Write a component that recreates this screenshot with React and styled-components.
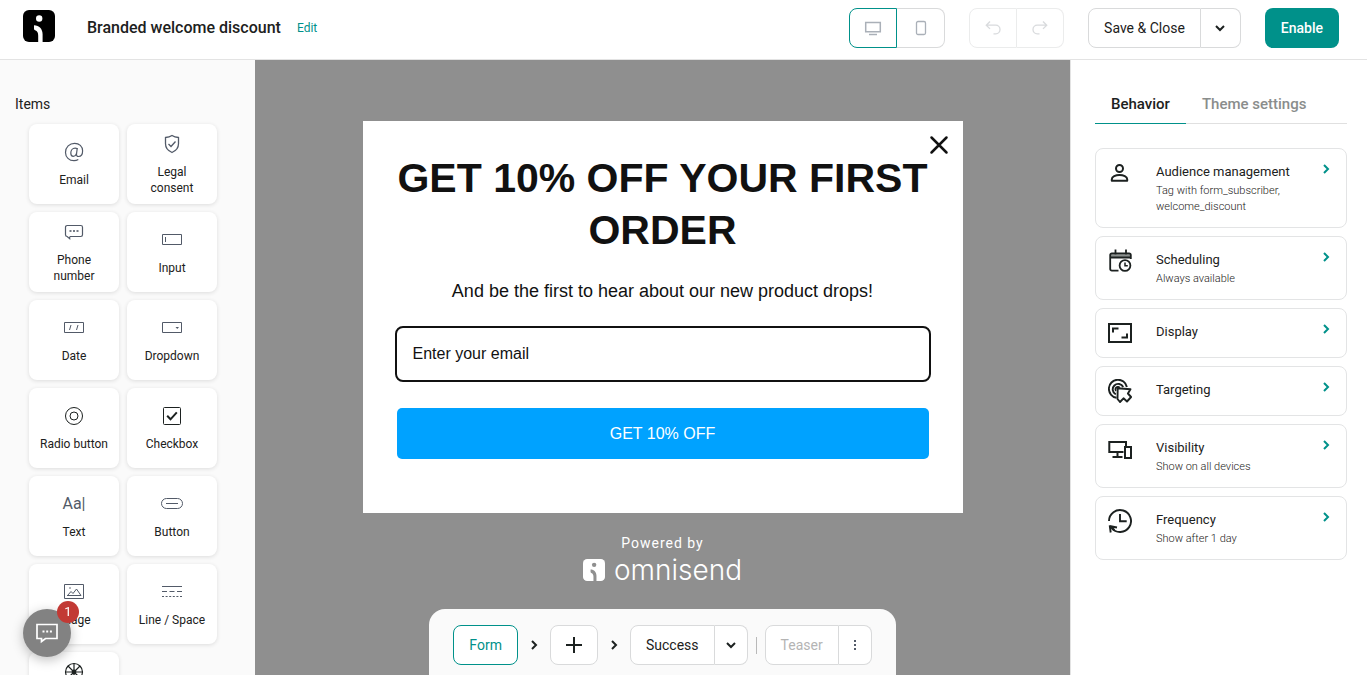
import React, { useState } from 'react';
import styled, { createGlobalStyle } from 'styled-components';

const GlobalStyle = createGlobalStyle`
  * {
    box-sizing: border-box;
  }

  body {
    margin: 0;
    font-family: Roboto, sans-serif;
    font-size: 14px;
    color: #1c2120;
    background: #fff;
  }

  button,
  input {
    font-family: inherit;
    color: inherit;
  }

  svg {
    display: block;
    flex: none;
  }
`;

const Page = styled.div`
  display: flex;
  flex-direction: column;
  height: 100vh;
  overflow: hidden;
`;

const Header = styled.header`
  display: flex;
  align-items: center;
  gap: 24px;
  flex: none;
  padding: 8px 28px 11px 23px;
  border-bottom: 1px solid #e3e3e3;
  background: #fff;
`;

const Branding = styled.div`
  display: flex;
  align-items: center;
  gap: 32px;
  margin-right: auto;
`;

const LogoLink = styled.a`
  padding-bottom: 4px;
`;

const TitleGroup = styled.div`
  display: flex;
  align-items: center;
  gap: 16px;
`;

const Title = styled.h1`
  margin: 0;
  font-size: 16px;
  font-weight: 500;
  line-height: 24px;
`;

const EditLink = styled.a`
  font-size: 12px;
  line-height: 16px;
  color: #00918a;
  text-decoration: none;
`;

const ButtonGroup = styled.div`
  display: flex;
  opacity: ${p => (p.$faded ? 0.5 : 1)};
`;

const Button = styled.button`
  display: flex;
  align-items: center;
  justify-content: center;
  height: 40px;
  padding: 0 ${p => (p.$icon ? 0 : 15)}px;
  width: ${p => (p.$icon ? `${p.$icon}px` : 'auto')};
  border: 1px solid ${p => (p.$active ? '#00918a' : '#d9dadb')};
  border-radius: 8px;
  background: #fff;
  color: ${p => (p.$active ? '#00918a' : p.$muted ? '#b4b4b4' : '#1c2120')};
  font-size: 14px;
  font-weight: 400;
  line-height: 20px;
  cursor: pointer;

  ${ButtonGroup} > &:not(:last-child) {
    border-top-right-radius: 0;
    border-bottom-right-radius: 0;
  }

  ${ButtonGroup} > &:not(:first-child) {
    border-left: none;
    border-top-left-radius: 0;
    border-bottom-left-radius: 0;
  }
`;

const PrimaryButton = styled(Button)`
  padding: 0 16px;
  border: none;
  background: #00918a;
  color: #fff;
  font-weight: 500;
`;

const Body = styled.div`
  display: flex;
  flex: 1;
  min-height: 0;
`;

const Sidebar = styled.aside`
  flex: none;
  width: 255px;
  padding: 34px 15px;
  background: #fafafa;
  overflow-y: auto;
  scrollbar-width: none;
`;

const SidebarTitle = styled.h2`
  margin: 0 0 10px;
  font-size: 14px;
  font-weight: 400;
  line-height: 20px;
`;

const ItemGrid = styled.div`
  display: grid;
  grid-template-columns: 90px 90px;
  grid-auto-rows: 80px;
  gap: 8px;
  padding-left: 14px;
`;

const Item = styled.button`
  display: flex;
  flex-direction: column;
  align-items: center;
  justify-content: center;
  gap: 8px;
  padding: 0 8px;
  border: none;
  border-radius: 8px;
  background: #fff;
  box-shadow: 0 1px 4px rgba(0, 0, 0, 0.12);
  font-size: 12px;
  line-height: 16px;
  cursor: grab;
`;

const TextGlyph = styled.span`
  height: 24px;
  color: #525a68;
  font-size: 16px;
  font-weight: 400;
  line-height: 24px;
`;

const Canvas = styled.main`
  display: flex;
  flex-direction: column;
  align-items: center;
  flex: 1;
  min-width: 0;
  padding-top: 61px;
  background: #8f8f8f;
`;

const Popup = styled.form`
  position: relative;
  display: flex;
  flex-direction: column;
  width: 100%;
  max-width: 600px;
  padding: 31px 34px 54px;
  background: #fff;
  color: #111;
  font-family: 'Liberation Sans', Arial, sans-serif;
  text-align: center;
`;

const CloseButton = styled.button`
  position: absolute;
  top: 12px;
  right: 12px;
  padding: 0;
  border: none;
  background: none;
  cursor: pointer;
`;

const Headline = styled.h2`
  margin: 0;
  font-size: 41px;
  font-weight: 700;
  line-height: 52px;
`;

const Subline = styled.p`
  margin: 22px 0 24px;
  font-size: 18px;
  line-height: 26px;
`;

const EmailInput = styled.input`
  width: 100%;
  height: 52px;
  padding: 0 16px;
  border: none;
  border-radius: 6px;
  outline: 2px solid #111;
  background: #fff;
  font-size: 16px;

  &::placeholder {
    color: #111;
    opacity: 1;
  }
`;

const SubmitButton = styled.button`
  height: 51px;
  margin-top: 28px;
  border: none;
  border-radius: 5px;
  background: #00a2ff;
  color: #fff;
  font-size: 16px;
  cursor: pointer;
`;

const Powered = styled.div`
  display: flex;
  flex-direction: column;
  align-items: center;
  margin-top: 20px;
  color: #fff;
  font-size: 14px;
  line-height: 20px;
`;

const PoweredText = styled.span`
  letter-spacing: 1px;
`;

const Wordmark = styled.div`
  display: flex;
  align-items: center;
  gap: 9px;
  font-family: Inter, sans-serif;
  font-size: 28px;
  font-weight: 300;
  line-height: 34px;
`;

const StepBar = styled.nav`
  display: flex;
  align-items: center;
  margin-top: auto;
  padding: 16px 24px 10px;
  border-radius: 16px 16px 0 0;
  background: #fafafa;
`;

const StepArrow = styled.span`
  display: flex;
  justify-content: center;
  width: 32px;
`;

const StepDivider = styled.span`
  width: 1px;
  height: 17px;
  margin: 0 8px;
  background: #b9b9b9;
`;

const Settings = styled.aside`
  flex: none;
  width: 297px;
  padding: 24px 20px 24px 24px;
  border-left: 1px solid #e3e3e3;
  background: #fff;
  overflow-y: auto;
  scrollbar-width: none;
`;

const Tabs = styled.div`
  display: flex;
  margin-bottom: 24px;
  box-shadow: inset 0 -1px #e0e0e0;
`;

const Tab = styled.button`
  height: 40px;
  padding: 0 16px;
  border: none;
  border-bottom: 1px solid ${p => (p.$active ? '#00918a' : 'transparent')};
  background: none;
  color: ${p => (p.$active ? '#1c2120' : '#8a8d8c')};
  font-size: 15px;
  font-weight: 500;
  cursor: pointer;
`;

const CardList = styled.div`
  display: flex;
  flex-direction: column;
  gap: 8px;
`;

const Card = styled.button`
  display: flex;
  align-items: flex-start;
  gap: 24px;
  width: 100%;
  padding: 12px;
  border: 1px solid #e3e4e5;
  border-radius: 8px;
  background: #fff;
  text-align: left;
  cursor: pointer;
`;

const CardText = styled.span`
  display: flex;
  flex-direction: column;
  flex: 1;
  min-width: 0;
`;

const CardTitle = styled.span`
  font-size: 13px;
  line-height: 22px;
`;

const CardNote = styled.span`
  font-size: 11px;
  font-weight: 300;
  line-height: 16px;
`;

const ChatButton = styled.button`
  position: fixed;
  left: 23px;
  bottom: 18px;
  display: flex;
  align-items: center;
  justify-content: center;
  width: 48px;
  height: 48px;
  border: none;
  border-radius: 50%;
  background: #828282;
  color: #fff;
  box-shadow: 0 3px 12px rgba(0, 0, 0, 0.25);
  cursor: pointer;
`;

const ChatBadge = styled.span`
  position: absolute;
  top: -8px;
  right: -8px;
  width: 22px;
  height: 22px;
  border-radius: 50%;
  background: #c23934;
  font-size: 13px;
  line-height: 22px;
`;

// Line icons, drawn in a square box of `size`
const Icon = ({ size = 24, stroke = '#525a68', width = 1, children }) => (
  <svg
    width={size}
    height={size}
    viewBox={`0 0 ${size} ${size}`}
    fill="none"
    stroke={stroke}
    strokeWidth={width}
    aria-hidden="true"
  >
    {children}
  </svg>
);

const Logo = ({ size, color, cut }) => (
  <svg width={size} height={size} viewBox="0 0 32 32" aria-hidden="true">
    <rect width="32" height="32" rx="6" fill={color} />
    <circle cx="16.2" cy="8.5" r="3.2" fill={cut} />
    <path d="M11 15.2c5.200 0 8.600 3.800 8.600 9V32h-4.400v-6.200c0-2.800-.8-4.600-3.100-5.500-.7-.3-1.100-.8-1.100-1.500z" fill={cut} />
  </svg>
);

const ChevronRight = ({ color = '#1c2120' }) => (
  <Icon size={16} stroke={color} width={2}>
    <path d="M6 4l4 4-4 4" />
  </Icon>
);

const ChevronDown = () => (
  <Icon size={16} stroke="#1c2120" width={2}>
    <path d="M4 6l4 4 4-4" />
  </Icon>
);

const items = [
  {
    label: 'Email',
    icon: (
      <Icon width={1.2}>
        <path d="M16.300 19.500c-1.300.8-2.700 1.200-4.300 1.200-4.800 0-8.500-3.500-8.500-8.300 0-5.200 4-9.100 9.100-9.100 4.600 0 8 3 8 7.500 0 3.500-1.700 5.700-4 5.700-1.600 0-2.300-1-2.100-2.600l.8-5.900" />
        <path d="M15.200 8.800c-.6-.5-1.300-.7-2.100-.7-2.600 0-4.300 2.300-4.300 4.900 0 2 .9 3.300 2.500 3.300 1.500 0 2.700-1.200 3.300-2.900" />
      </Icon>
    ),
  },
  {
    label: 'Legal consent',
    icon: (
      <Icon width={1.3}>
        <path d="M12 3.500c2 1.400 4 1.900 6.500 2v6.300c0 4.200-2.500 7-6.500 8.700-4-1.700-6.500-4.500-6.500-8.700V5.500c2.500-.1 4.500-.6 6.500-2z" />
        <path d="M8.500 12l2.500 2.500 4.500-5" />
      </Icon>
    ),
  },
  {
    label: 'Phone number',
    icon: (
      <Icon width={1.2}>
        <path d="M8 16.500h10.800c1 0 1.700-.7 1.700-1.700V7.200c0-1-.7-1.700-1.700-1.700H5.200c-1 0-1.700.7-1.700 1.700v7.600c0 1 .7 1.700 1.700 1.700l2.500 2.200v-2.200" />
        <path d="M7.500 11h2M11 11h2M14.500 11h2" strokeWidth="1.800" opacity=".8" />
      </Icon>
    ),
  },
  {
    label: 'Input',
    icon: (
      <Icon>
        <path d="M2.500 6.500h19v10h-19zM5.500 9v5" />
      </Icon>
    ),
  },
  {
    label: 'Date',
    icon: (
      <Icon>
        <path d="M2.500 6.500h19v10h-19zM9 9l-1.500 5M16 9l-1.500 5" />
      </Icon>
    ),
  },
  {
    label: 'Dropdown',
    icon: (
      <Icon>
        <path d="M2.500 6.500h19v10h-19z" />
        <path d="M15.500 11h3.500l-1.750 2z" fill="#525a68" stroke="none" />
      </Icon>
    ),
  },
  {
    label: 'Radio button',
    icon: (
      <Icon stroke="#1c2120">
        <circle cx="12" cy="12" r="8.500" />
        <circle cx="12" cy="12" r="4" />
      </Icon>
    ),
  },
  {
    label: 'Checkbox',
    icon: (
      <Icon stroke="#1c2120">
        <rect x="3.500" y="3.500" width="17" height="17" rx="1" />
        <path d="M7.200 11.800l3.300 3.500 6.300-7" strokeWidth="2" />
      </Icon>
    ),
  },
  { label: 'Text', icon: <TextGlyph aria-hidden="true">Aa|</TextGlyph> },
  {
    label: 'Button',
    icon: (
      <Icon>
        <rect x="1.500" y="6.500" width="21" height="10" rx="5" />
        <path d="M6 11.500h12" />
      </Icon>
    ),
  },
  {
    label: 'Image',
    icon: (
      <Icon>
        <path d="M2.500 4.500h19v14h-19zM5 15.500h14M5.500 15.500l3.500-4 2 2 3.500-4.500 4.500 6.500" />
        <circle cx="8" cy="8" r=".8" fill="#525a68" stroke="none" />
      </Icon>
    ),
  },
  {
    label: 'Line / Space',
    icon: (
      <Icon>
        <path d="M2 6.500h20" />
        <path d="M2 11.500h20" strokeDasharray="5 2.500" />
        <path d="M2 16.500h20" strokeDasharray="2 1.600" />
      </Icon>
    ),
  },
  {
    label: 'Wheel of fortune',
    icon: (
      <Icon stroke="#1c2120" width={1.2}>
        <circle cx="12" cy="12" r="8.500" />
        <path d="M12 3.500v17M3.500 12h17M6 6l12 12M18 6L6 18" />
        <circle cx="12" cy="12" r="1.800" fill="#1c2120" />
      </Icon>
    ),
  },
];

const settings = [
  {
    title: 'Audience management',
    note: 'Tag with form_subscriber, welcome_discount',
    icon: (
      <Icon stroke="#1c2120" width={2}>
        <circle cx="11.500" cy="7.500" r="3.500" />
        <path d="M3.800 19.800v-1.600c0-2.500 3.800-4.300 7.700-4.300s7.700 1.800 7.700 4.300v1.600z" strokeLinejoin="round" />
      </Icon>
    ),
  },
  {
    title: 'Scheduling',
    note: 'Always available',
    icon: (
      <Icon stroke="#1c2120" width={1.800}>
        <path d="M3 5h20v3.500H3z" fill="#8b908e" stroke="none" />
        <path d="M10.500 21.700H3.900c-1 0-1.700-.7-1.700-1.700V6c0-1 .7-1.700 1.700-1.700h17.200c1 0 1.700.7 1.700 1.700v4M2.500 8.500h20M7.500 .5v5M18 .5v5" />
        <circle cx="17" cy="16.500" r="5.400" />
        <path d="M17 13.500v3.300h2.800" strokeWidth="1.500" />
      </Icon>
    ),
  },
  {
    title: 'Display',
    icon: (
      <Icon stroke="#1c2120" width={2}>
        <path d="M1 3h22v18H1zM5 11.500V7.500h5.500M19 12.500v4h-5.500" />
      </Icon>
    ),
  },
  {
    title: 'Targeting',
    icon: (
      <Icon stroke="#1c2120" width={1.900}>
        <path d="M8.500 18.800A9.100 9.100 0 1 1 18.900 8M7.800 15.300A5.500 5.500 0 1 1 15.200 8M8 11.800a2.300 2.300 0 1 1 3.600-3" />
        <path d="M9.700 9.300l12.800 1-2.600 4.200 3.200 3.500-4.100 4.500-3.500-3.200-3.500 3.700-2.500-3z" strokeLinejoin="round" />
      </Icon>
    ),
  },
  {
    title: 'Visibility',
    note: 'Show on all devices',
    icon: (
      <Icon stroke="#1c2120" width={2}>
        <path d="M15.500 15H1.300V5H18v5M9.500 15v5M4.500 20h10" />
        <rect x="17" y="10" width="6" height="11" />
      </Icon>
    ),
  },
  {
    title: 'Frequency',
    note: 'Show after 1 day',
    icon: (
      <Icon stroke="#1c2120" width={1.900}>
        <path d="M1 12A11 11 0 1 1 3.500 19M12 5v7.300h6.700" />
        <path d="M1.700 16.300l1 7.200M1.500 17l7.500 1.500M2.500 17.500l4 3.500" />
      </Icon>
    ),
  },
];

function App() {
  const [device, setDevice] = useState('desktop');
  const [tab, setTab] = useState('Behavior');
  const [email, setEmail] = useState('');

  return (
    <>
      <GlobalStyle />
      <Page>
        <Header>
          <Branding>
            <LogoLink href="#home" aria-label="Home">
              <Logo size={32} color="#000" cut="#fff" />
            </LogoLink>
            <TitleGroup>
              <Title>Branded welcome discount</Title>
              <EditLink href="#edit">Edit</EditLink>
            </TitleGroup>
          </Branding>
          <ButtonGroup>
            <Button
              $icon={48}
              $active={device === 'desktop'}
              aria-label="Desktop view"
              onClick={() => setDevice('desktop')}
            >
              <Icon size={18} stroke="#aab0b8">
                <path d="M1.700 3.500h14.600v9.300H1.700z" strokeWidth="1.500" />
                <path d="M5 15.500h8" strokeWidth="1.500" />
              </Icon>
            </Button>
            <Button
              $icon={48}
              $active={device === 'mobile'}
              aria-label="Mobile view"
              onClick={() => setDevice('mobile')}
            >
              <Icon size={18} stroke="#aab0b8" width={1.300}>
                <rect x="4.500" y="2.500" width="9" height="13" rx="1.500" />
              </Icon>
            </Button>
          </ButtonGroup>
          <ButtonGroup $faded>
            <Button $icon={48} aria-label="Undo">
              <Icon size={18} stroke="#b4b8bd" width={1.300}>
                <path d="M6 2.500L2.300 6.200 6 9.900M2.500 6.200h9.200a4.300 4.300 0 0 1 0 8.600H9.500" />
              </Icon>
            </Button>
            <Button $icon={47} aria-label="Redo">
              <Icon size={18} stroke="#b4b8bd" width={1.300}>
                <path d="M12 2.500l3.700 3.700L12 9.900M15.500 6.200H6.300a4.300 4.300 0 0 0 0 8.600h2.200" />
              </Icon>
            </Button>
          </ButtonGroup>
          <ButtonGroup>
            <Button>Save &amp; Close</Button>
            <Button $icon={40} aria-label="More save options">
              <ChevronDown />
            </Button>
          </ButtonGroup>
          <PrimaryButton>Enable</PrimaryButton>
        </Header>

        <Body>
          <Sidebar>
            <SidebarTitle>Items</SidebarTitle>
            <ItemGrid>
              {items.map(item => (
                <Item key={item.label}>
                  {item.icon}
                  <span>{item.label}</span>
                </Item>
              ))}
            </ItemGrid>
          </Sidebar>

          <Canvas>
            <Popup onSubmit={e => e.preventDefault()}>
              <CloseButton type="button" aria-label="Close">
                <Icon stroke="#111" width={2.500}>
                  <path d="M4.500 4.500l15 15M19.500 4.500l-15 15" strokeLinecap="round" />
                </Icon>
              </CloseButton>
              <Headline>GET 10% OFF YOUR FIRST ORDER</Headline>
              <Subline>And be the first to hear about our new product drops!</Subline>
              <EmailInput
                type="email"
                aria-label="Enter your email"
                placeholder="Enter your email"
                value={email}
                onChange={e => setEmail(e.target.value)}
              />
              <SubmitButton>GET 10% OFF</SubmitButton>
            </Popup>
            <Powered>
              <PoweredText>Powered by</PoweredText>
              <Wordmark>
                <Logo size={22} color="#fff" cut="#8f8f8f" />
                omnisend
              </Wordmark>
            </Powered>
            <StepBar>
              <Button $active>Form</Button>
              <StepArrow>
                <ChevronRight />
              </StepArrow>
              <Button $icon={48} aria-label="Add step">
                <Icon stroke="#1c2120" width={2}>
                  <path d="M12 4v16M4 12h16" />
                </Icon>
              </Button>
              <StepArrow>
                <ChevronRight />
              </StepArrow>
              <ButtonGroup>
                <Button>Success</Button>
                <Button $icon={33} aria-label="More steps">
                  <ChevronDown />
                </Button>
              </ButtonGroup>
              <StepDivider />
              <ButtonGroup>
                <Button $muted>Teaser</Button>
                <Button $icon={33} aria-label="Teaser options">
                  <Icon size={16}>
                    <path d="M8 3v2M8 7v2M8 11v2" strokeWidth="2" />
                  </Icon>
                </Button>
              </ButtonGroup>
            </StepBar>
          </Canvas>

          <Settings>
            <Tabs>
              {['Behavior', 'Theme settings'].map(name => (
                <Tab key={name} $active={tab === name} onClick={() => setTab(name)}>
                  {name}
                </Tab>
              ))}
            </Tabs>
            <CardList>
              {settings.map(card => (
                <Card key={card.title}>
                  {card.icon}
                  <CardText>
                    <CardTitle>{card.title}</CardTitle>
                    {card.note && <CardNote>{card.note}</CardNote>}
                  </CardText>
                  <ChevronRight color="#00918a" />
                </Card>
              ))}
            </CardList>
          </Settings>
        </Body>
      </Page>
      <ChatButton aria-label="Open chat, 1 new message">
        <Icon stroke="#fff" width={1.700}>
          <path d="M2 3.500h20v14H10.500L6.500 20.500v-3H2z" />
          <path d="M7.500 10.500h2M11.200 10.500h2M14.900 10.500h2" strokeWidth="2" />
        </Icon>
        <ChatBadge>1</ChatBadge>
      </ChatButton>
    </>
  );
}

export default App;
